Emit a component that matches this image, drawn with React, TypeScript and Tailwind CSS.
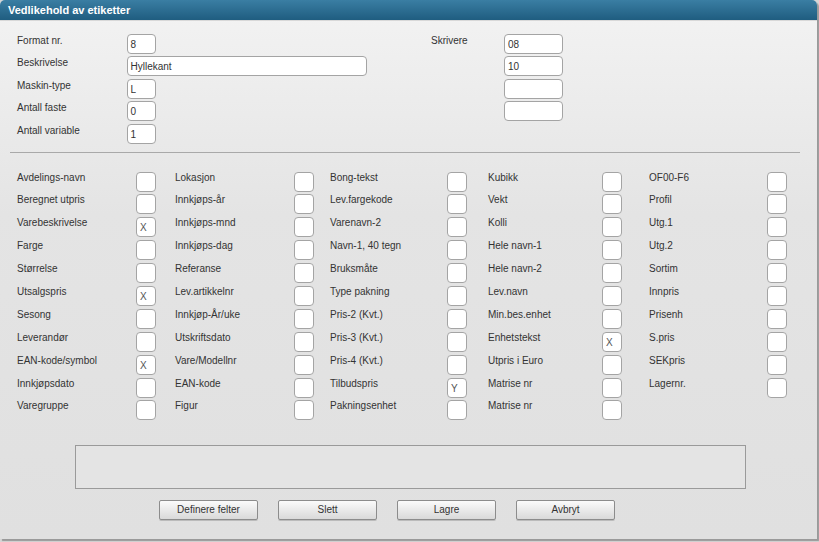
import React from 'react'

type Field = { label: string; value?: string }

const columns: { width: string; labelWidth: string; fields: Field[] }[] = [
  {
    width: 'w-[158px]',
    labelWidth: 'w-[119px]',
    fields: [
      { label: 'Avdelings-navn' },
      { label: 'Beregnet utpris' },
      { label: 'Varebeskrivelse', value: 'X' },
      { label: 'Farge' },
      { label: 'Størrelse' },
      { label: 'Utsalgspris', value: 'X' },
      { label: 'Sesong' },
      { label: 'Leverandør' },
      { label: 'EAN-kode/symbol', value: 'X' },
      { label: 'Innkjøpsdato' },
      { label: 'Varegruppe' },
    ],
  },
  {
    width: 'w-[155px]',
    labelWidth: 'w-[119px]',
    fields: [
      { label: 'Lokasjon' },
      { label: 'Innkjøps-år' },
      { label: 'Innkjøps-mnd' },
      { label: 'Innkjøps-dag' },
      { label: 'Referanse' },
      { label: 'Lev.artikkelnr' },
      { label: 'Innkjøp-År/uke' },
      { label: 'Utskriftsdato' },
      { label: 'Vare/Modellnr' },
      { label: 'EAN-kode' },
      { label: 'Figur' },
    ],
  },
  {
    width: 'w-[158px]',
    labelWidth: 'w-[117px]',
    fields: [
      { label: 'Bong-tekst' },
      { label: 'Lev.fargekode' },
      { label: 'Varenavn-2' },
      { label: 'Navn-1, 40 tegn' },
      { label: 'Bruksmåte' },
      { label: 'Type pakning' },
      { label: 'Pris-2 (Kvt.)' },
      { label: 'Pris-3 (Kvt.)' },
      { label: 'Pris-4 (Kvt.)' },
      { label: 'Tilbudspris', value: 'Y' },
      { label: 'Pakningsenhet' },
    ],
  },
  {
    width: 'w-[161px]',
    labelWidth: 'w-[114px]',
    fields: [
      { label: 'Kubikk' },
      { label: 'Vekt' },
      { label: 'Kolli' },
      { label: 'Hele navn-1' },
      { label: 'Hele navn-2' },
      { label: 'Lev.navn' },
      { label: 'Min.bes.enhet' },
      { label: 'Enhetstekst', value: 'X' },
      { label: 'Utpris i Euro' },
      { label: 'Matrise nr' },
      { label: 'Matrise nr' },
    ],
  },
  {
    width: 'w-[150px]',
    labelWidth: 'w-[118px]',
    fields: [
      { label: 'OF00-F6' },
      { label: 'Profil' },
      { label: 'Utg.1' },
      { label: 'Utg.2' },
      { label: 'Sortim' },
      { label: 'Innpris' },
      { label: 'Prisenh' },
      { label: 'S.pris' },
      { label: 'SEKpris' },
      { label: 'Lagernr.' },
    ],
  },
]

const topFields = [
  { label: 'Format nr.', value: '8', width: 'w-[29px]' },
  { label: 'Beskrivelse', value: 'Hyllekant', width: 'w-[240px]' },
  { label: 'Maskin-type', value: 'L', width: 'w-[29px]' },
  { label: 'Antall faste', value: '0', width: 'w-[29px]' },
  { label: 'Antall variable', value: '1', width: 'w-[29px]' },
]

const printers = ['08', '10', '', '']

function Box({ value, className }: { value?: string; className: string }) {
  return (
    <div
      className={`h-[20px] rounded-[4px] border border-[#a4a4a4] bg-white pl-[3px] text-[10px] leading-[19px] text-[#333] ${className}`}
    >
      {value}
    </div>
  )
}

function Button({ children }: { children: React.ReactNode }) {
  return (
    <button className="h-[20px] w-[99px] rounded-[2px] border border-[#8c8c8c] bg-gradient-to-b from-[#fbfbfb] to-[#d9d9d9] text-[10px] leading-[18px] text-[#333] shadow-[0_1px_0_#bbb]">
      {children}
    </button>
  )
}

export default function App() {
  return (
    <div className="h-[542px] w-[819px] bg-[#d6d6d6] font-['Liberation_Sans',Arial,sans-serif]">
      <div className="flex h-[539px] w-[817px] flex-col overflow-hidden rounded-t-[5px] bg-gradient-to-b from-[#f3f3f3] via-[#e4e4e4] via-40% to-[#e0e0e0] shadow-[2px_2px_1px_#9a9a9a]">
        <header className="h-[21px] flex-shrink-0 border-b border-[#d8d8d8] bg-gradient-to-b from-[#3a7ea3] to-[#1f5d80] pl-2 text-[11px] font-bold leading-[20px] text-white">
          Vedlikehold av etiketter
        </header>

        <div className="flex pt-[13px]">
          <div className="flex w-[431px] flex-col gap-[2.4px] pl-[17px]">
            {topFields.map((f) => (
              <div key={f.label} className="flex items-start">
                <span className="mt-[1px] w-[109.5px] text-[10px] leading-[12px] text-[#333]">{f.label}</span>
                <Box value={f.value} className={f.width} />
              </div>
            ))}
          </div>
          <div className="flex items-start">
            <span className="mt-[1px] w-[73px] text-[10px] leading-[12px] text-[#333]">Skrivere</span>
            <div className="flex flex-col gap-[2.4px]">
              {printers.map((p, i) => (
                <Box key={i} value={p} className="w-[59px]" />
              ))}
            </div>
          </div>
        </div>

        <div className="mx-[10px] mt-[8px] h-px w-[790px] bg-[#a9a9a9]" />

        <div className="flex pl-[17px] pt-[19px]">
          {columns.map((col, ci) => (
            <div key={ci} className={`flex flex-col gap-[2.9px] ${col.width}`}>
              {col.fields.map((f, fi) => (
                <div key={fi} className="flex items-start">
                  <span className={`${col.labelWidth} text-[10px] leading-[12px] text-[#333]`}>{f.label}</span>
                  <Box value={f.value} className="w-[20px] text-[#555]" />
                </div>
              ))}
            </div>
          ))}
        </div>

        <div className="ml-[75px] mt-[25px] h-[44px] w-[671px] border border-[#9a9a9a] bg-[#e4e4e4]" />

        <div className="ml-[159px] mt-[11px] flex gap-[20px]">
          <Button>Definere felter</Button>
          <Button>Slett</Button>
          <Button>Lagre</Button>
          <Button>Avbryt</Button>
        </div>
      </div>
    </div>
  )
}
